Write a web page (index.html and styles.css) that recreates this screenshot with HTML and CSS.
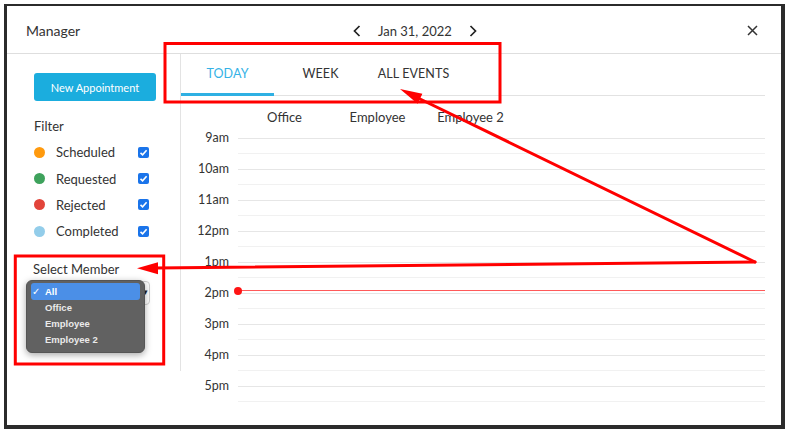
FILE: index.html
```html
<!DOCTYPE html>
<html>
<head>
<meta charset="utf-8">
<link rel="stylesheet" href="styles.css">
</head>
<body>
<div class="frame">
  <div class="header">
    <div class="title">Manager</div>
    <div class="nav">
      <svg class="chev" width="8" height="12" viewBox="0 0 8 12"><path d="M6.5 1 L1.5 6 L6.5 11" fill="none" stroke="#222" stroke-width="1.7"/></svg>
      <span class="date">Jan 31, 2022</span>
      <svg class="chev" width="8" height="12" viewBox="0 0 8 12"><path d="M1.5 1 L6.5 6 L1.5 11" fill="none" stroke="#222" stroke-width="1.7"/></svg>
    </div>
    <div class="close">
      <svg width="11" height="11" viewBox="0 0 11 11"><path d="M1 1 L10 10 M10 1 L1 10" stroke="#333" stroke-width="1.5"/></svg>
    </div>
  </div>
  <div class="body">
    <div class="sidebar">
      <div class="btn">New Appointment</div>
      <div class="filter-title">Filter</div>
      <div class="filter-row"><span class="dot orange"></span><span class="flabel">Scheduled</span><span class="cb"><svg width="11" height="11" viewBox="0 0 11 11"><path d="M2.5 5.8 L4.6 7.8 L8.6 3.3" fill="none" stroke="#fff" stroke-width="1.6"/></svg></span></div>
      <div class="filter-row"><span class="dot green"></span><span class="flabel">Requested</span><span class="cb"><svg width="11" height="11" viewBox="0 0 11 11"><path d="M2.5 5.8 L4.6 7.8 L8.6 3.3" fill="none" stroke="#fff" stroke-width="1.6"/></svg></span></div>
      <div class="filter-row"><span class="dot red"></span><span class="flabel">Rejected</span><span class="cb"><svg width="11" height="11" viewBox="0 0 11 11"><path d="M2.5 5.8 L4.6 7.8 L8.6 3.3" fill="none" stroke="#fff" stroke-width="1.6"/></svg></span></div>
      <div class="filter-row"><span class="dot blue"></span><span class="flabel">Completed</span><span class="cb"><svg width="11" height="11" viewBox="0 0 11 11"><path d="M2.5 5.8 L4.6 7.8 L8.6 3.3" fill="none" stroke="#fff" stroke-width="1.6"/></svg></span></div>
      <div class="member-title">Select Member</div>
      <div class="member-select">
        <div class="select-box"><span class="caret">▾</span></div>
        <div class="popup">
          <div class="opt active"><span class="check">✓</span>All</div>
          <div class="opt">Office</div>
          <div class="opt">Employee</div>
          <div class="opt">Employee 2</div>
        </div>
      </div>
    </div>
    <div class="main">
      <div class="tabs">
        <div class="tab active">TODAY</div>
        <div class="tab">WEEK</div>
        <div class="tab">ALL EVENTS</div>
      </div>
      <div class="cols">
        <div class="col">Office</div>
        <div class="col">Employee</div>
        <div class="col">Employee 2</div>
      </div>
      <div class="rows">
        <div class="row"><div class="tlabel">9am</div><div class="slot"><div class="half"></div></div></div>
        <div class="row"><div class="tlabel">10am</div><div class="slot"><div class="half"></div></div></div>
        <div class="row"><div class="tlabel">11am</div><div class="slot"><div class="half"></div></div></div>
        <div class="row"><div class="tlabel">12pm</div><div class="slot"><div class="half"></div></div></div>
        <div class="row"><div class="tlabel">1pm</div><div class="slot"><div class="half"></div></div></div>
        <div class="row"><div class="tlabel">2pm</div><div class="slot"><span class="now-line"><span class="now-dot"></span></span><div class="half"></div></div></div>
        <div class="row"><div class="tlabel">3pm</div><div class="slot"><div class="half"></div></div></div>
        <div class="row"><div class="tlabel">4pm</div><div class="slot"><div class="half"></div></div></div>
        <div class="row"><div class="tlabel">5pm</div><div class="slot"><div class="half"></div></div></div>
      </div>
    </div>
  </div>
</div>
<svg class="annot" width="793" height="437" viewBox="0 0 793 437">
  <rect x="165" y="43.5" width="335" height="58.5" fill="none" stroke="#ff0000" stroke-width="3"/>
  <rect x="15.3" y="256" width="148.4" height="108" fill="none" stroke="#ff0000" stroke-width="3"/>
  <line x1="755" y1="262" x2="155" y2="268" stroke="#ff0000" stroke-width="3" stroke-linecap="round"/>
  <polygon points="137,268.3 158,262.3 158,274.3" fill="#ff0000"/>
  <line x1="755" y1="262" x2="418" y2="98" stroke="#ff0000" stroke-width="3" stroke-linecap="round"/>
  <polygon points="400,89 422.4,93.8 417.6,103.7" fill="#ff0000"/>
</svg>
</body>
</html>
```
FILE: styles.css
```css
* { box-sizing: border-box; }
html, body { margin: 0; padding: 0; background: #fff; }
body {
  font-family: "Lato", "Noto Sans", sans-serif;
  color: #333;
  width: 793px;
  height: 437px;
  position: relative;
  overflow: hidden;
}
.frame {
  margin: 4px 0 0 4px;
  width: 781px;
  height: 425px;
  border-style: solid;
  border-color: #2b2b2b;
  border-width: 2px 4px 4px 3px;
  background: #fff;
  display: flex;
  flex-direction: column;
}
.header {
  height: 48px;
  border-bottom: 1px solid #dedede;
  display: grid;
  grid-template-columns: 327px auto 1fr;
  align-items: center;
  padding: 2px 23px 0 19px;
  flex-shrink: 0;
}
.title { font-size: 14px; color: #333; }
.nav { display: flex; align-items: center; gap: 17px; }
.chev { display: block; }
.date { font-size: 13px; color: #333; }
.close { justify-self: end; display: flex; }
.close svg { display: block; }

.body { display: flex; flex: 1; }
.sidebar {
  width: 174px;
  height: 317px;
  border-right: 1px solid #e3e3e3;
  padding: 19px 0 0 27px;
  flex-shrink: 0;
}
.btn {
  width: 122px;
  height: 28px;
  background: #1badde;
  border-radius: 3px;
  color: #fff;
  font-size: 11px;
  display: flex;
  align-items: center;
  justify-content: center;
}
.filter-title { margin-top: 17px; font-size: 13px; line-height: 16px; }
.filter-row {
  display: flex;
  align-items: center;
  height: 26.4px;
  font-size: 13px;
}
.filter-title + .filter-row { margin-top: 5px; }
.dot { width: 11px; height: 11px; border-radius: 50%; flex-shrink: 0; }
.dot.orange { background: #ff9a0e; }
.dot.green { background: #3ea25c; }
.dot.red { background: #e2443a; }
.dot.blue { background: #93cdea; }
.flabel { margin-left: 11px; width: 82px; color: #333; }
.cb {
  width: 11px; height: 11px;
  background: #1a74ea;
  border-radius: 2px;
  display: flex;
}
.cb svg { display: block; }
.member-title { margin-top: 16px; font-size: 13px; line-height: 16px; margin-left: -1px; }
.member-select { position: relative; margin-top: 4px; margin-left: -1px; }
.select-box {
  width: 117px;
  height: 24px;
  border: 1px solid #d0d0d0;
  border-radius: 4px;
  background: #fff;
  position: relative;
}
.caret {
  position: absolute;
  right: 1px;
  top: 4px;
  font-size: 9px;
  color: #222;
}
.popup {
  position: absolute;
  left: -7px;
  top: -1px;
  width: 119px;
  height: 73px;
  background: #616161;
  border-radius: 6px;
  box-shadow: 0 2px 7px rgba(0,0,0,0.35);
  border: 1px solid #555;
  padding: 2px 4px;
  font-family: "Liberation Sans", Arial, sans-serif;
  font-weight: bold;
  font-size: 9.5px;
  color: #eaeaea;
}
.opt {
  height: 16px;
  line-height: 16px;
  padding-left: 14px;
  position: relative;
  border-radius: 3px;
}
.opt.active { background: #4b8fe7; color: #fff; height: 17px; line-height: 17px; }
.check { position: absolute; left: 1px; top: 0; font-weight: normal; font-size: 10px; }

.main { flex: 1; padding-right: 16px; }
.tabs {
  display: flex;
  height: 42px;
  border-bottom: 1px solid #e2e2e2;
}
.tab {
  width: 93px;
  height: 42px;
  margin-bottom: -1px;
  display: flex;
  align-items: center;
  justify-content: center;
  padding-bottom: 3px;
  font-size: 12.5px;
  color: #333;
  letter-spacing: 0.1px;
}
.tab.active {
  color: #35b2e6;
  border-bottom: 3px solid #2fb0e3;
  padding-bottom: 0;
}
.cols {
  display: flex;
  height: 34px;
  padding-left: 57px;
  padding-top: 13px;
}
.col {
  width: 93px;
  text-align: center;
  font-size: 13px;
  line-height: 16px;
  color: #333;
}
.rows { display: flex; flex-direction: column; }
.row { display: flex; height: 31px; }
.tlabel {
  width: 48px;
  text-align: right;
  font-size: 12.5px;
  line-height: 16px;
  color: #333;
}
.slot {
  flex: 1;
  margin-left: 9px;
  margin-top: 8px;
  height: 23px;
  border-top: 1px solid #e6e6e6;
  position: relative;
}
.half { height: 15px; border-bottom: 1px solid #f1f1f1; }
.now-line {
  position: absolute;
  left: 0;
  right: 0;
  top: -4px;
  height: 1px;
  background: #ff5a5a;
}
.now-dot {
  position: absolute;
  left: -4px;
  top: -3.5px;
  width: 8px;
  height: 8px;
  border-radius: 50%;
  background: #ff1414;
}
.annot { position: absolute; top: 0; left: 0; pointer-events: none; }
```
